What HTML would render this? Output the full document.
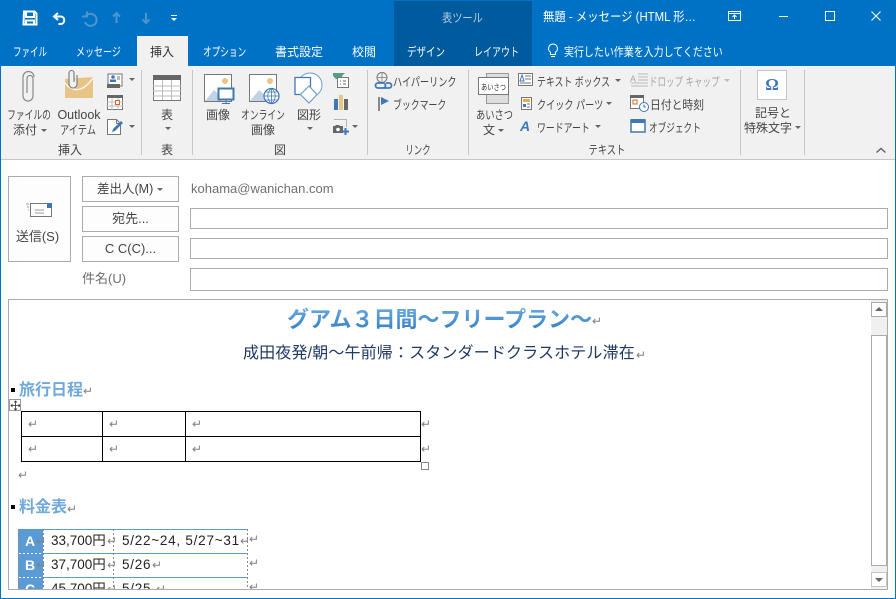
<!DOCTYPE html>
<html lang="ja"><head><meta charset="utf-8"><title>無題 - メッセージ</title>
<style>
html,body{margin:0;padding:0;background:#fff;}
body{width:896px;height:599px;position:relative;overflow:hidden;font-family:"Liberation Sans","Noto Sans CJK JP",sans-serif;font-size:12px;color:#444;}
.a,.t,.c{position:absolute;white-space:nowrap;}
.t{line-height:16px;transform-origin:0 50%;}
.c{line-height:16px;text-align:center;}
.w{color:#fff;}
.box{position:absolute;box-sizing:border-box;border:1px solid #ababab;background:#fff;}
.btn{position:absolute;box-sizing:border-box;border:1px solid #ababab;background:#fdfdfd;text-align:center;color:#444;line-height:24px;font-size:13px;}
.sep{position:absolute;top:70px;width:1px;height:85px;background:#c6c6c6;}
.tri{position:absolute;width:0;height:0;border-left:3px solid transparent;border-right:3px solid transparent;border-top:3px solid #666;}
.ret{position:absolute;color:#808080;font-size:12px;line-height:10px;}
svg{position:absolute;overflow:visible;}
</style></head><body>
<!-- title bar -->
<div class="a" style="left:0;top:0;width:896px;height:66px;background:#0072c6"></div>
<div class="a" style="left:394px;top:1px;width:138px;height:65px;background:#005a9e"></div>
<div class="a" style="left:137px;top:36px;width:51px;height:30px;background:#f1f1f1"></div>
<!-- QAT icons -->
<svg style="left:0;top:0" width="190" height="36">
<path d="M24 11.500h10.500l2 2v11h-13z M26 12v5h8v-5 M26 24.500v-4h8v4" fill="none" stroke="#fff" stroke-width="2"/>
<path d="M58 13l-4 3.500 4 3.500 M54.500 16.500h6c5 0 5 7.500 0 7.500h-2" fill="none" stroke="#fff" stroke-width="2"/>
<path d="M87 11.500v5h-5 M86 16a6 6 0 1 1-1 6" fill="none" stroke="#4e95cf" stroke-width="2"/>
<path d="M116.500 23v-10 M113 16.500l3.500-3.500 3.500 3.500" fill="none" stroke="#4e95cf" stroke-width="2"/>
<path d="M146 13v10 M142.500 19.500l3.500 3.500 3.500-3.500" fill="none" stroke="#4e95cf" stroke-width="2"/>
<path d="M171 15h6v1h-6z M171 18h6l-3 3z" fill="#fff"/>
</svg>
<!-- title -->
<div class="t" style="left:442px;top:10px;color:#b4cfe6;transform:scaleX(.85)">表ツール</div>
<div class="t w" style="left:543px;top:9px;font-size:12.500px;transform:scaleX(.91)">無題 - メッセージ (HTML 形…</div>
<svg style="left:720px;top:0" width="176" height="36">
<path d="M8.500 11.500h12v9h-12z M8.500 13.500h12 M14.500 19v-4 M12.500 17l2-2 2 2" fill="none" stroke="#fff"/>
<path d="M59 16.500h9" stroke="#fff" fill="none"/>
<path d="M105.500 11.500h9v9h-9z" stroke="#fff" fill="none"/>
<path d="M151.500 11.500l9 9 M160.500 11.500l-9 9" stroke="#fff" fill="none"/>
</svg>
<!-- tabs -->
<div class="t w" style="left:13px;top:44px;transform:scaleX(.71)">ファイル</div>
<div class="t w" style="left:76px;top:44px;transform:scaleX(.75)">メッセージ</div>
<div class="t" style="left:150px;top:44px;color:#333;">挿入</div>
<div class="t w" style="left:203px;top:44px;transform:scaleX(.72)">オプション</div>
<div class="t w" style="left:275px;top:44px;">書式設定</div>
<div class="t w" style="left:352px;top:44px;">校閲</div>
<div class="t w" style="left:407px;top:44px;transform:scaleX(.79)">デザイン</div>
<div class="t w" style="left:474px;top:44px;transform:scaleX(.75)">レイアウト</div>
<svg style="left:546px;top:43px" width="14" height="16"><path d="M7 1a4.500 4.500 0 0 0-2.500 8.200V11.500h5V9.200A4.500 4.500 0 0 0 7 1z M5 13.500h4" fill="none" stroke="#fff"/></svg>
<div class="t w" style="left:564px;top:44px;transform:scaleX(.83)">実行したい作業を入力してください</div>
<!-- ribbon -->
<div class="a" style="left:1px;top:66px;width:894px;height:94px;background:#f1f1f1;border-bottom:1px solid #c6c6c6;box-sizing:border-box"></div>
<div class="sep" style="left:141px"></div>
<div class="sep" style="left:192px"></div>
<div class="sep" style="left:367px"></div>
<div class="sep" style="left:468px"></div>
<div class="sep" style="left:740px"></div>
<div class="sep" style="left:804px"></div>
<!-- insert group -->
<svg style="left:0;top:66px" width="140" height="50">
<path d="M26 27V12.500a3 3 0 0 1 6 0V30a5 5 0 0 1-10 0V11a5.500 5.500 0 0 1 11 0" transform="translate(1,0)" fill="none" stroke="#8a8a8a" stroke-width="1.200"/>
<path d="M65 13l28-2v21H65z" fill="#e9c487"/>
<path d="M65 17c8 10 18 9 28-5" fill="none" stroke="#fff" stroke-width="1.200"/>
<path d="M74 16V7a2.500 2.500 0 0 0-5 0v11a4 4 0 0 0 8 0V9" fill="#f1f1f1" stroke="#777" stroke-width="1.100"/>
<path d="M108 8h14v12h-14z" fill="#fff" stroke="#777"/>
<path d="M107 18h13v4h-13z" fill="#666"/>
<circle cx="113" cy="11" r="1.800" fill="#3f78b5"/><path d="M110 16h6v-2.500h-6z" fill="#3f78b5"/>
<path d="M117 11h3M117 13h3" stroke="#777"/>
<path d="M107.500 29.500h15v14h-15z" fill="#fff" stroke="#777"/>
<path d="M107 29h16v3h-16z" fill="#666"/>
<path d="M107 36h16M107 40h16M112 32v12M118 32v12" stroke="#bbb"/>
<path d="M115.500 34.500h4v4h-4z" fill="#fff" stroke="#d2691e"/>
</svg>
<svg style="left:0;top:116px" width="140" height="20">
<path d="M107.500 3.500h9l4 4v11h-13z M116.500 3.500v4h4" fill="#fff" stroke="#777"/>
<path d="M112 16l1-3 8-8 2 2-8 8z" fill="#3f78b5"/>
</svg>
<div class="tri" style="left:129px;top:78px"></div>
<div class="tri" style="left:129px;top:125px"></div>
<div class="c" style="left:-1px;top:107px;width:60px;transform:scaleX(.73)">ファイルの</div>
<div class="c" style="left:0px;top:122px;width:50px;">添付</div><div class="tri" style="left:41px;top:129px"></div>
<div class="c" style="left:53px;top:107px;width:52px;font-size:12.500px">Outlook</div>
<div class="c" style="left:53px;top:122px;width:50px;transform:scaleX(.77)">アイテム</div>
<div class="c" style="left:50px;top:142px;width:40px;">挿入</div>
<!-- table group -->
<svg style="left:150px;top:72px" width="36" height="30">
<path d="M3.500 4.500h27v24h-27z" fill="#fff" stroke="#777"/><path d="M3 3h28v5H3z" fill="#666"/>
<path d="M3 14h28M3 19h28M3 24h28M12.500 8v20M21.500 8v20" stroke="#bbb"/>
</svg>
<div class="c" style="left:147px;top:107px;width:40px;">表</div><div class="tri" style="left:165px;top:127px"></div>
<div class="c" style="left:147px;top:142px;width:40px;">表</div>
<!-- image group -->
<svg style="left:200px;top:66px" width="165" height="75">
<path d="M4.500 8.500h27v27h-27z" fill="#fff" stroke="#777"/><circle cx="25" cy="15" r="3" fill="#e9c487"/><path d="M5 35l9-11 8 7v4z" fill="#c0d3e6"/>
<path d="M18.500 22.500h15v11h-15z" fill="#fff" stroke="#3f78b5" stroke-width="2"/><path d="M26 34v3M22 37.500h8" stroke="#3f78b5"/>
<path d="M49.500 8.500h27v27h-27z" fill="#fff" stroke="#777"/><circle cx="70" cy="15" r="3" fill="#e9c487"/><path d="M50 35l9-11 8 7v4z" fill="#c0d3e6"/>
<circle cx="71.500" cy="30" r="7.500" fill="#fff" stroke="#3f78b5" stroke-width="1.200"/><path d="M64 30h15M65.500 26h12M65.500 34h12M71.500 22.500v15M71.500 22.500c-5 4-5 11 0 15M71.500 22.500c5 4 5 11 0 15" fill="none" stroke="#3f78b5" stroke-width=".8"/>
<circle cx="110" cy="19" r="12" fill="#fff" stroke="#6f9fcc"/>
<path d="M95 11.500h15.500v17H95z" fill="#fff" stroke="#3f78b5" stroke-width="1.300"/>
<path d="M109 20l8 8.500-8 8.500-8.500-8.500z" fill="#fff" stroke="#6f9fcc" stroke-width="1.200"/>
<path d="M133 7h12l-3 3v3h-6l-3-3z" fill="#5a9a8a"/>
<path d="M137.500 11.500h11v10h-11z" fill="#fff" stroke="#777"/><path d="M140 15h1M143 15h3M140 18h1M143 18h3" stroke="#666"/>
<path d="M134 33h4v11h-4z" fill="#3f78b5"/><path d="M139 29h4v15h-4z" fill="#e9c487"/><path d="M144 33h4v11h-4z" fill="#666"/>
</svg>
<svg style="left:330px;top:118px" width="25" height="18">
<path d="M4.500 1.500h12v8" fill="none" stroke="#777" stroke-dasharray="1 1"/>
<path d="M3 8h2l1-1h3l1 1h3v7H3z" fill="#666"/><circle cx="8" cy="11.500" r="1.800" fill="#fff"/>
<path d="M12 12.500h7v2h-7zM14.500 10h2v7h-2z" fill="#3f78b5"/>
</svg>
<div class="tri" style="left:352px;top:125px"></div>
<div class="c" style="left:198px;top:107px;width:40px;">画像</div>
<div class="c" style="left:233px;top:107px;width:60px;transform:scaleX(.73)">オンライン</div>
<div class="c" style="left:238px;top:122px;width:50px;">画像</div>
<div class="c" style="left:289px;top:107px;width:40px;">図形</div><div class="tri" style="left:307px;top:127px"></div>
<div class="c" style="left:260px;top:142px;width:40px;">図</div>
<!-- link group -->
<svg style="left:374px;top:70px" width="24" height="44">
<circle cx="8" cy="7.500" r="5" fill="none" stroke="#777"/><path d="M3 7.500h10M8 2.500v10" stroke="#777" stroke-width=".7"/>
<path d="M4 13h5a2.500 2.500 0 0 1 0 5H4a2.500 2.500 0 0 1 0-5zM12 13h3a2.500 2.500 0 0 1 0 5h-5" fill="none" stroke="#3f78b5" stroke-width="1.800"/>
<path d="M5 27v14" stroke="#666" stroke-width="1.500"/><path d="M7 27l8 4-8 4z" fill="#3f78b5"/>
</svg>
<div class="t" style="left:393px;top:74px;transform:scaleX(.76)">ハイパーリンク</div>
<div class="t" style="left:393px;top:97px;transform:scaleX(.74)">ブックマーク</div>
<div class="c" style="left:398px;top:142px;width:40px;transform:scaleX(.7)">リンク</div>
<!-- text group -->
<svg style="left:476px;top:72px" width="36" height="32">
<path d="M10.500 1.500h22v30h-22z" fill="#ddd" stroke="#999"/><path d="M2.500 5.500h30v17h-30z" fill="#fff" stroke="#777"/>
<text x="5" y="18" font-size="8" textLength="25" lengthAdjust="spacingAndGlyphs" fill="#333" font-family="Liberation Sans,Noto Sans CJK JP,sans-serif">あいさつ</text>
</svg>
<div class="c" style="left:471px;top:107px;width:44px;transform:scaleX(.77)">あいさつ</div>
<div class="c" style="left:471px;top:122px;width:36px;">文</div><div class="tri" style="left:498px;top:129px"></div>
<svg style="left:518px;top:72px" width="20" height="62">
<path d="M.500 1.500h14v12H.500z" fill="#fff" stroke="#777"/><path d="M2 9l2-6 2 6z" fill="none" stroke="#3f78b5"/><path d="M7 4h6M7 7h6M2 11h11" stroke="#777"/>
<path d="M3.500 25.500h10v12h-10z" fill="#fff" stroke="#777"/><path d="M5 27h7v3H5z" fill="#e9a84e"/><path d="M5 32h3v3H5z" fill="#3f78b5"/><path d="M9 32h3M9 35h3" stroke="#777"/>
<text x="2" y="59" font-size="14" font-weight="bold" font-style="italic" fill="#3f78b5" font-family="Liberation Sans,sans-serif">A</text>
</svg>
<div class="t" style="left:537px;top:74px;transform:scaleX(.74)">テキスト ボックス</div><div class="tri" style="left:615px;top:79px"></div>
<div class="t" style="left:537px;top:97px;transform:scaleX(.76)">クイック パーツ</div><div class="tri" style="left:606px;top:102px"></div>
<div class="t" style="left:537px;top:120px;transform:scaleX(.74)">ワードアート</div><div class="tri" style="left:595px;top:125px"></div>
<svg style="left:630px;top:72px" width="24" height="62">
<text x="0" y="10" font-size="9" fill="#aaa" font-family="Liberation Sans,sans-serif">A</text>
<path d="M8 2h10M8 5h10M8 8h10M1 11h17M1 14h17" stroke="#bbb"/>
<path d="M.500 24.500h13v12H.500z" fill="#fff" stroke="#777"/><path d="M0 23h14v3H0z" fill="#666"/><path d="M3 28h4v4H3z" fill="#fff" stroke="#d2691e"/>
<circle cx="14" cy="35" r="4.500" fill="#fff" stroke="#3f78b5"/><path d="M14 32.500V35h2" fill="none" stroke="#3f78b5"/>
<path d="M1 48h14v12H1z" fill="#fff" stroke="#3f78b5" stroke-width="1.500"/><path d="M1 47h14v4H1z" fill="#3f78b5"/>
</svg>
<div class="t" style="left:649px;top:74px;color:#a6a6a6;transform:scaleX(.71)">ドロップ キャップ</div><div class="tri" style="left:724px;top:79px;border-top-color:#bbb"></div>
<div class="t" style="left:650px;top:97px;transform:scaleX(.9)">日付と時刻</div>
<div class="t" style="left:649px;top:120px;transform:scaleX(.72)">オブジェクト</div>
<div class="c" style="left:584px;top:142px;width:40px;transform:scaleX(.77)">テキスト</div>
<!-- symbols -->
<div class="a" style="left:757px;top:70px;width:30px;height:30px;box-sizing:border-box;border:1px solid #c6c6c6;background:#fff;text-align:center;font:bold 17px/28px 'Liberation Serif',serif;color:#3f78b5;">Ω</div>
<div class="c" style="left:748px;top:105px;width:50px;">記号と</div>
<div class="c" style="left:744px;top:120px;width:48px;">特殊文字</div><div class="tri" style="left:795px;top:126px"></div>
<svg style="left:875px;top:146px" width="12" height="10"><path d="M1.500 6.500l4.500-4 4.500 4" fill="none" stroke="#666" stroke-width="1.500"/></svg>
<!-- header form -->
<div class="btn" style="left:8px;top:176px;width:63px;height:86px;"></div>
<svg style="left:25px;top:202px" width="30" height="16">
<path d="M5.500 1.500h21v13h-21z" fill="#fff" stroke="#777"/><path d="M22 1h5v5h-5z" fill="#3f78b5"/>
<path d="M10 8h9M10 11h9M1 2h3M2 5h2M3 8h1" stroke="#999"/>
</svg>
<div class="c" style="left:6px;top:229px;width:63px;font-size:13px">送信(S)</div>
<div class="t" style="left:82px;top:176px;width:97px;height:26px;box-sizing:border-box;border:1px solid #ababab;background:#fdfdfd;"></div>
<div class="t" style="left:97px;top:181px;font-size:12.500px;">差出人(M)</div><div class="tri" style="left:157px;top:188px"></div>
<div class="btn" style="left:82px;top:206px;width:97px;height:26px;">宛先...</div>
<div class="btn" style="left:82px;top:236px;width:97px;height:26px;">C C(C)...</div>
<div class="t" style="left:191px;top:181px;color:#707070;font-size:13px;">kohama@wanichan.com</div>
<div class="box" style="left:190px;top:208px;width:698px;height:21px;"></div>
<div class="box" style="left:190px;top:238px;width:698px;height:21px;"></div>
<div class="box" style="left:190px;top:268px;width:698px;height:23px;"></div>
<div class="t" style="left:82px;top:271px;color:#6d6d6d;font-size:13px">件名(U)</div>
<!-- document frame -->
<div class="box" style="left:8px;top:299px;width:880px;height:291px;overflow:hidden;">
<div class="a" style="left:0;top:0;width:862px;height:289px;overflow:hidden;">
<div class="t" style="left:278px;top:7px;font-size:22px;line-height:26px;font-weight:bold;background:linear-gradient(#6aa9e0,#2f7cc4);-webkit-background-clip:text;background-clip:text;color:transparent;">グアム３日間～フリープラン～</div>
<div class="ret" style="left:583px;top:16px;">↵</div>
<div class="t" style="left:234px;top:44px;font-size:16px;line-height:20px;color:#1f3864;letter-spacing:.15px;">成田夜発/朝～午前帰：スタンダードクラスホテル滞在</div>
<div class="ret" style="left:627px;top:50px;">↵</div>
<div class="a" style="left:2px;top:88px;width:4px;height:4px;background:#000"></div>
<div class="t" style="left:10px;top:81px;font-size:16px;line-height:20px;font-weight:bold;color:#6fa8dc;">旅行日程</div>
<div class="ret" style="left:74px;top:86px;">↵</div>
<div class="a" style="left:0;top:99px;width:12px;height:12px;box-sizing:border-box;border:1px solid #999;background:#fff"></div>
<svg style="left:1.500px;top:100.500px" width="9" height="9"><path d="M4.500 0v9M0 4.500h9M3 1.500l1.500-1.500 1.500 1.500M3 7.500l1.500 1.500 1.500-1.500M1.500 3L0 4.500 1.500 6M7.500 3L9 4.500 7.500 6" fill="none" stroke="#333" stroke-width=".8"/></svg>
<!-- empty table -->
<svg style="left:12px;top:111px" width="405" height="54">
<path d="M.500.500h399v50H.500z M.500 25.500h399 M81.500.500v50 M164.500.500v50" fill="none" stroke="#000"/>
</svg>
<div class="ret" style="left:19px;top:119px;">↵</div><div class="ret" style="left:100px;top:119px;">↵</div><div class="ret" style="left:183px;top:119px;">↵</div><div class="ret" style="left:412px;top:119px;">↵</div>
<div class="ret" style="left:19px;top:144px;">↵</div><div class="ret" style="left:100px;top:144px;">↵</div><div class="ret" style="left:183px;top:144px;">↵</div><div class="ret" style="left:412px;top:144px;">↵</div>
<div class="a" style="left:412px;top:162px;width:8px;height:8px;box-sizing:border-box;border:1px solid #888;background:#fff"></div>
<div class="ret" style="left:9px;top:170px;">↵</div>
<div class="a" style="left:2px;top:205px;width:4px;height:4px;background:#000"></div>
<div class="t" style="left:10px;top:198px;font-size:16px;line-height:20px;font-weight:bold;color:#6fa8dc;">料金表</div>
<div class="ret" style="left:58px;top:204px;">↵</div>
<!-- price table -->
<div class="a" style="left:9px;top:229px;width:25px;height:62px;background:#5b9bd5"></div>
<svg style="left:9px;top:229px" width="232" height="62">
<path d="M25 .500h204M25 24.500h204M25 48.500h204" stroke="#5b9bd5" fill="none"/>
<path d="M.500 0v62M25.500 0v62M95.500 0v62M229.500 0v62" stroke="#888" stroke-dasharray="2 2" fill="none"/>
<path d="M1 24.500h24M1 48.500h24" stroke="#fff" stroke-dasharray="2 2" fill="none"/>
</svg>
<div class="c" style="left:9px;top:231px;width:24px;color:#fff;font-weight:bold;font-size:14px;line-height:20px;">A</div>
<div class="c" style="left:9px;top:255px;width:24px;color:#fff;font-weight:bold;font-size:14px;line-height:20px;">B</div>
<div class="c" style="left:9px;top:279px;width:24px;color:#fff;font-weight:bold;font-size:14px;line-height:20px;">C</div>
<div class="t" style="left:42px;top:231px;font-size:13.500px;line-height:20px;color:#222;">33,700円</div>
<div class="t" style="left:42px;top:255px;font-size:13.500px;line-height:20px;color:#222;">37,700円</div>
<div class="t" style="left:42px;top:279px;font-size:13.500px;line-height:20px;color:#222;">45,700円</div>
<div class="t" style="left:113px;top:231px;font-size:13.500px;line-height:20px;color:#222;letter-spacing:.75px">5/22~24, 5/27~31</div>
<div class="t" style="left:113px;top:255px;font-size:13.500px;line-height:20px;color:#222;letter-spacing:.75px">5/26</div>
<div class="t" style="left:113px;top:279px;font-size:13.500px;line-height:20px;color:#222;letter-spacing:.75px">5/25</div>
<div class="ret" style="left:231px;top:236px;">↵</div><div class="ret" style="left:240px;top:234px;">↵</div><div class="ret" style="left:240px;top:258px;">↵</div><div class="ret" style="left:240px;top:282px;">↵</div>
<div class="ret" style="left:143px;top:260px;">↵</div><div class="ret" style="left:147px;top:284px;">↵</div>
<div class="ret" style="left:27px;top:236px;">↵</div><div class="ret" style="left:27px;top:260px;">↵</div>
<div class="ret" style="left:98px;top:236px;">↵</div><div class="ret" style="left:98px;top:260px;">↵</div><div class="ret" style="left:98px;top:284px;">↵</div>
</div>
<!-- scrollbar -->
<div class="a" style="left:862px;top:0;width:16px;height:289px;background:#f0f0f0"></div>
<div class="a" style="left:862px;top:2px;width:16px;height:15px;box-sizing:border-box;border:1px solid #ababab;background:#fff"></div>
<div class="a" style="left:866px;top:7px;width:0;height:0;border-left:4px solid transparent;border-right:4px solid transparent;border-bottom:4px solid #666"></div>
<div class="a" style="left:862px;top:35px;width:16px;height:231px;box-sizing:border-box;border:1px solid #ababab;background:#fff"></div>
<div class="a" style="left:862px;top:272px;width:16px;height:15px;box-sizing:border-box;border:1px solid #c6c6c6;background:#fff"></div>
<div class="a" style="left:866px;top:278px;width:0;height:0;border-left:4px solid transparent;border-right:4px solid transparent;border-top:4px solid #666"></div>
</div>
<!-- window border -->
<div class="a" style="left:0;top:66px;width:1px;height:533px;background:#0072c6"></div>
<div class="a" style="left:895px;top:66px;width:1px;height:533px;background:#0072c6"></div>
<div class="a" style="left:0;top:598px;width:896px;height:1px;background:#0072c6"></div>
</body></html>
